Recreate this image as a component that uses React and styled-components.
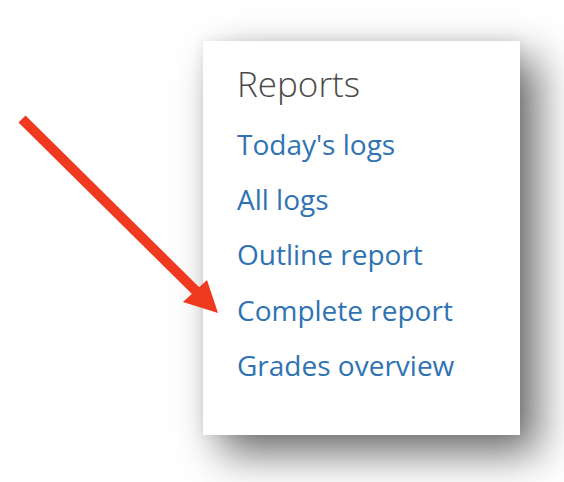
import styled, { createGlobalStyle } from "styled-components";

const GlobalStyle = createGlobalStyle`
    html, body {
        margin: 0;
        padding: 0;
        background: #fff;
    }
`;

const Page = styled.div`
    position: relative;
    width: 564px;
    height: 482px;
    overflow: hidden;
    background: #fff;
    padding: 41px 0 0 203px;
    box-sizing: border-box;
    font-family: "Open Sans", "Noto Sans", sans-serif;
`;

const Card = styled.div`
    width: 317px;
    height: 394px;
    box-sizing: border-box;
    background: #fff;
    padding: 21px 0 0 34px;
    box-shadow: 18px 18px 40px rgba(0, 0, 0, 0.58), 0 0 12px rgba(0, 0, 0, 0.08);
`;

const Heading = styled.h3`
    margin: 0 0 10.5px;
    font-size: 35px;
    line-height: 44px;
    font-weight: 300;
    color: #4a4a4a;
`;

const LinkList = styled.ul`
    list-style: none;
    margin: 0;
    padding: 0;
`;

const LinkItem = styled.li`
    font-size: 28px;
    line-height: 55.4px;
    color: #2f73b3;
`;

const Arrow = styled.svg`
    position: absolute;
    left: 0;
    top: 0;
`;

const links = [
    "Today's logs",
    "All logs",
    "Outline report",
    "Complete report",
    "Grades overview",
];

export default function App() {
    return (
        <>
            <GlobalStyle />
            <Page>
                <Card>
                    <Heading>Reports</Heading>
                    <LinkList>
                        {links.map((l) => (
                            <LinkItem key={l}>{l}</LinkItem>
                        ))}
                    </LinkList>
                </Card>
                <Arrow width="564" height="482" viewBox="0 0 564 482">
                    <line x1="22" y1="119" x2="197" y2="292" stroke="#ef3a1f" strokeWidth="10" />
                    <polygon points="218,313 183,302 207,280" fill="#ef3a1f" />
                </Arrow>
            </Page>
        </>
    );
}
